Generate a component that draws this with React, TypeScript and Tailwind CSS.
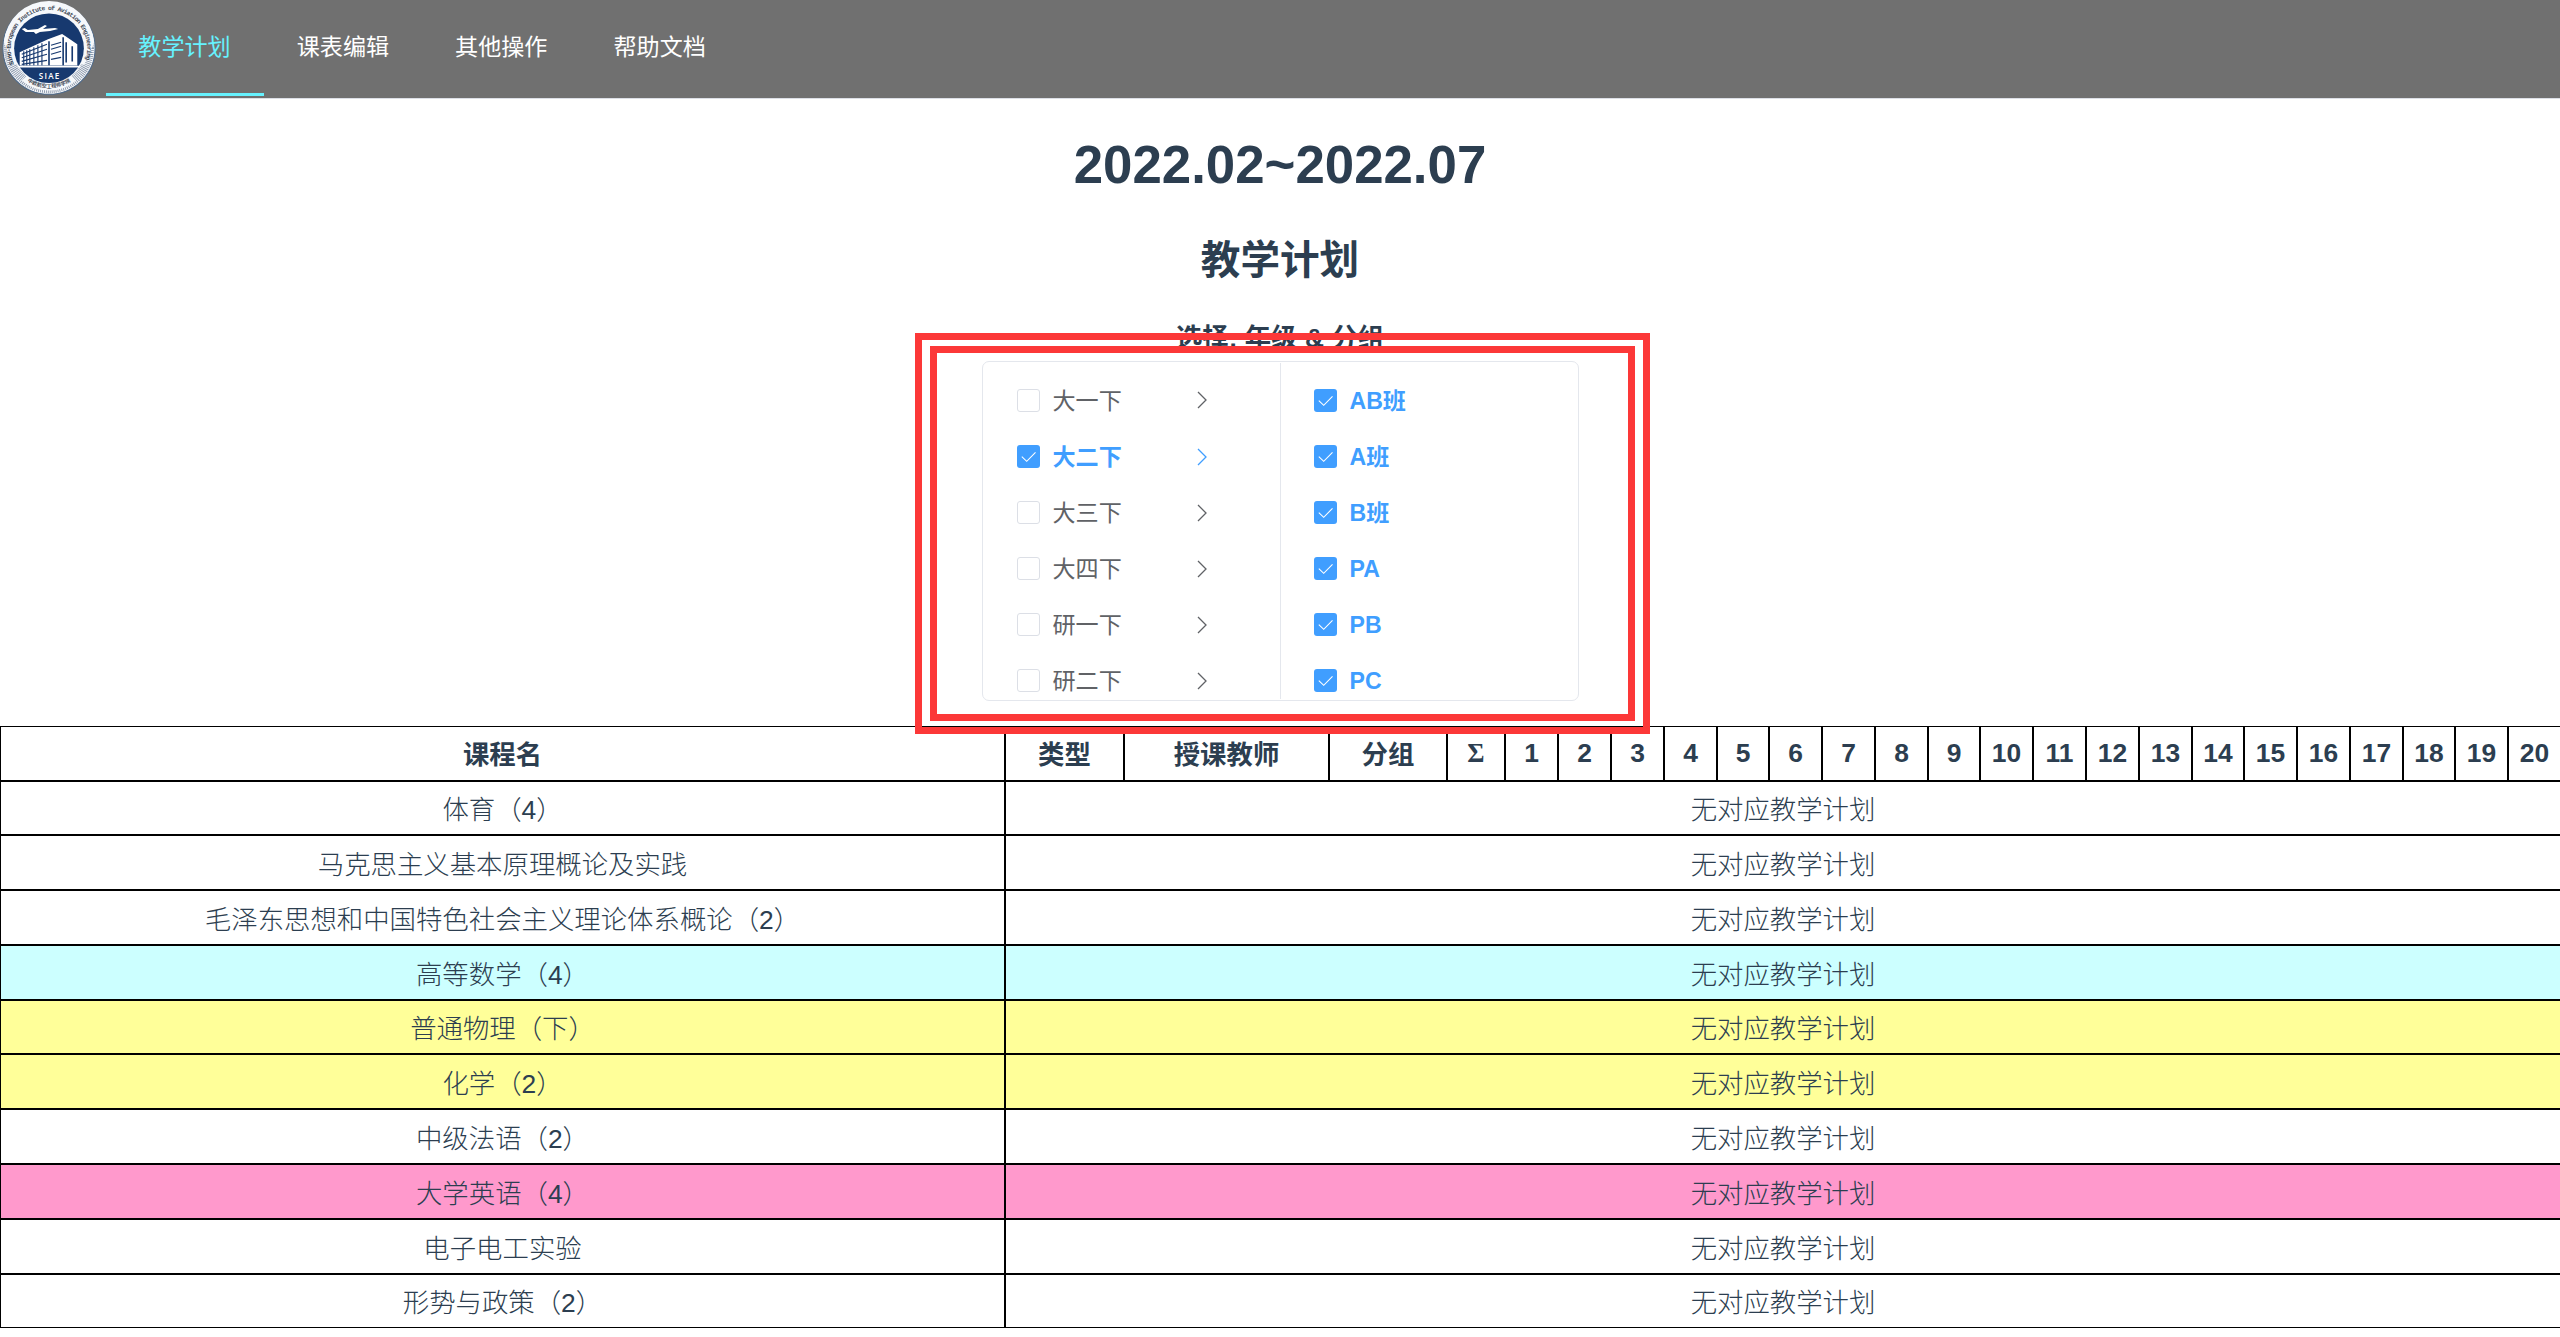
import React from "react";

const navItems = ["教学计划", "课表编辑", "其他操作", "帮助文档"];
const grades = ["大一下", "大二下", "大三下", "大四下", "研一下", "研二下"];
const groups = ["AB班", "A班", "B班", "PA", "PB", "PC"];
const weeks = Array.from({ length: 20 }, (_, i) => String(i + 1));

const courses = [
  { name: "体育（4）", h: "h-[54px]", bg: "bg-white" },
  { name: "马克思主义基本原理概论及实践", h: "h-[55px]", bg: "bg-white" },
  { name: "毛泽东思想和中国特色社会主义理论体系概论（2）", h: "h-[55px]", bg: "bg-white" },
  { name: "高等数学（4）", h: "h-[55px]", bg: "bg-[#ccffff]" },
  { name: "普通物理（下）", h: "h-[54px]", bg: "bg-[#ffff99]" },
  { name: "化学（2）", h: "h-[55px]", bg: "bg-[#ffff99]" },
  { name: "中级法语（2）", h: "h-[55px]", bg: "bg-white" },
  { name: "大学英语（4）", h: "h-[55px]", bg: "bg-[#ff99cc]" },
  { name: "电子电工实验", h: "h-[55px]", bg: "bg-white" },
  { name: "形势与政策（2）", h: "h-[53px]", bg: "bg-white" },
];

function Logo() {
  return (
    <svg className="h-[97px] w-[98px] shrink-0" viewBox="0.5 1 97 94.500">
      <defs>
        <path id="arcTop" d="M14.4 63.500 A37.900 37.900 0 1 1 83.600 63.500" />
        <path id="arcBottom" d="M19 73.500 A39.800 39.800 0 0 0 79 73.500" />
      </defs>
      <circle cx="49" cy="48" r="45.600" fill="#f6f8fb" stroke="#4d6a8c" strokeWidth="1" />
      <circle cx="49" cy="48" r="40" fill="none" stroke="#8794a8" strokeWidth="9" strokeDasharray="0.8 1" pathLength="251" />
      <path d="M4.2 42 A45 45 0 0 1 93.800 42 L84 64 L14 64 Z" fill="#f6f8fb" />
      <path d="M22 80 L30 73 L68 73 L76 80 A42 42 0 0 1 22 80 Z" fill="#f6f8fb" />
      <circle cx="49" cy="48" r="34.500" fill="#17396f" />
      <text fontFamily="Liberation Mono" fontSize="6.200" fontWeight="700" fill="#3c4654">
        <textPath href="#arcTop" textLength="146" lengthAdjust="spacing">Sino-European Institute of Aviation Engineering</textPath>
      </text>
      <text fontFamily="Noto Sans CJK SC" fontSize="5" fontWeight="700" fill="#3c4654">
        <textPath href="#arcBottom" startOffset="50%" textAnchor="middle">中欧航空工程师学院</textPath>
      </text>
      <path d="M22 29 L25 28 L28 30 L38 29 L45 25 L47 26 L43 29 L55 28 L58 29 L50 31 L40 32 L36 34 L34 32 L26 32 Z" fill="#fff" />
      <path d="M20 52 L48 39 L62 34 L65 36 L77 44 V65 H20 Z" fill="#fff" />
      <g stroke="#17396f" strokeWidth="1.1" fill="none">
        <path d="M22 54 L47 44 M22 57.500 L47 49 M22 61 L47 54 M22 64 L47 60" />
        <path d="M24 51V65M27 50V65M30 49V65M34 47V65M38 45V65M42 43V65" />
        <path d="M51 45L61 42M51 49L61 46M51 54L61 51M51 59L61 57" />
        <path d="M49 41V65M63 37V65M66 42V62M72 46V61" strokeWidth="1.600" />
      </g>
      <path d="M18 66.200H80" stroke="#fff" strokeWidth="1.600" />
      <text x="49" y="78" textAnchor="middle" fontFamily="Open Sans" fontSize="8" fontWeight="600" fill="#fff" textLength="20.500">SIAE</text>
    </svg>
  );
}

function Box({ checked }: { checked: boolean }) {
  return checked ? (
    <span className="flex size-[23px] shrink-0 items-center justify-center rounded-[3px] bg-[#409eff]">
      <svg className="size-[23px]" viewBox="0 0 23 23" fill="none" stroke="#fff" strokeWidth="1.1">
        <path d="M4.800 11.600 L9.700 16.300 L18.500 7.300" />
      </svg>
    </span>
  ) : (
    <span className="size-[23px] shrink-0 rounded-[3px] border border-[#dcdfe6] bg-white" />
  );
}

function Option({ label, active, arrow }: { label: string; active: boolean; arrow?: boolean }) {
  return (
    <div className={"flex h-[56.1px] items-center text-[23.1px] " + (active ? "font-bold text-[#409eff]" : "text-[#606266]")}>
      <Box checked={active} />
      <span className="ml-[12.5px] w-[144.5px] pt-[2px] leading-none whitespace-nowrap">{label}</span>
      {arrow && (
        <svg className="h-[18px] w-[10px]" viewBox="0 0 10 18" fill="none" stroke="currentColor" strokeWidth="1.3">
          <path d="M1 1 L9 9 L1 17" />
        </svg>
      )}
    </div>
  );
}

const cols =
  "grid-cols-[1005px_119px_205px_118px_58px_53px_53px_53px_53px_52px_53px_53px_53px_52px_53px_53px_53px_53px_52px_53px_53px_53px_52px_53px_51px]";
const th = "flex items-center justify-center border-r-2 border-black last:border-r-0";

export default function App() {
  return (
    <div className="relative h-[1337px] w-[2560px] overflow-hidden bg-white font-['Liberation_Sans','Noto_Sans_CJK_SC',sans-serif] text-[26.4px] text-[#2c3e50]">
      <header className="flex h-[99px] border-b border-[#dcdfe6] bg-[#707070]">
        <div className="w-[106px]">
          <Logo />
        </div>
        {navItems.map((t, i) => (
          <div
            key={t}
            className={
              "mr-[0.4px] flex h-[96px] w-[158px] items-center justify-center border-b-[3px] pt-px pr-px text-[23.1px] " +
              (i === 0 ? "border-[#66f2ff] text-[#66f2ff]" : "border-transparent text-white")
            }
          >
            {t}
          </div>
        ))}
      </header>

      <h1 className="mt-[36px] h-[60px] text-center text-[52.8px] leading-[60px] font-bold">2022.02~2022.07</h1>
      <h2 className="mt-[36px] h-[58px] text-center text-[39.6px] leading-[58px] font-bold">教学计划</h2>
      <h4 className="mt-[29px] h-[40px] text-center text-[26.4px] leading-[40px] font-bold">选择: 年级 &amp; 分组</h4>

      <div className="ml-[982px] mt-[3px] flex h-[340px] w-[597px] overflow-hidden rounded-[7px] border border-[#e4e7ed]">
        <div className="mt-px h-[336px] w-[298px] border-r border-[#e4e7ed] pt-[9.4px] pl-[34px]">
          {grades.map((g, i) => (
            <Option key={g} label={g} active={i === 1} arrow />
          ))}
        </div>
        <div className="mt-px flex-1 pt-[9.4px] pl-[33px]">
          {groups.map((g) => (
            <Option key={g} label={g} active />
          ))}
        </div>
      </div>

      <div className="mt-[25px] border-t border-l border-black">
        <div className={"grid h-[55px] border-b-2 border-black font-bold " + cols}>
          {["课程名", "类型", "授课教师", "分组"].map((t) => (
            <div key={t} className={th + " pt-[5px]"}>
              {t}
            </div>
          ))}
          <div className={th}>
            <span className="font-['Liberation_Serif']">Σ</span>
          </div>
          {weeks.map((w) => (
            <div key={w} className={th}>
              {w}
            </div>
          ))}
        </div>
        {courses.map((c, i) => (
          <div
            key={c.name}
            className={"grid grid-cols-[1005px_1fr] border-black font-light " + c.h + " " + c.bg + (i === courses.length - 1 ? " border-b" : " border-b-2")}
          >
            <div className="flex items-center justify-center border-r-2 border-black pt-[6px]">{c.name}</div>
            <div className="flex items-center justify-center pt-[6px]">无对应教学计划</div>
          </div>
        ))}
      </div>

      <div className="absolute top-[333px] left-[915px] h-[401px] w-[735px] border-[7px] border-[#fc3838]" />
      <div className="absolute top-[346px] left-[930px] h-[375px] w-[705px] border-[7px] border-[#fc3838]" />
    </div>
  );
}
